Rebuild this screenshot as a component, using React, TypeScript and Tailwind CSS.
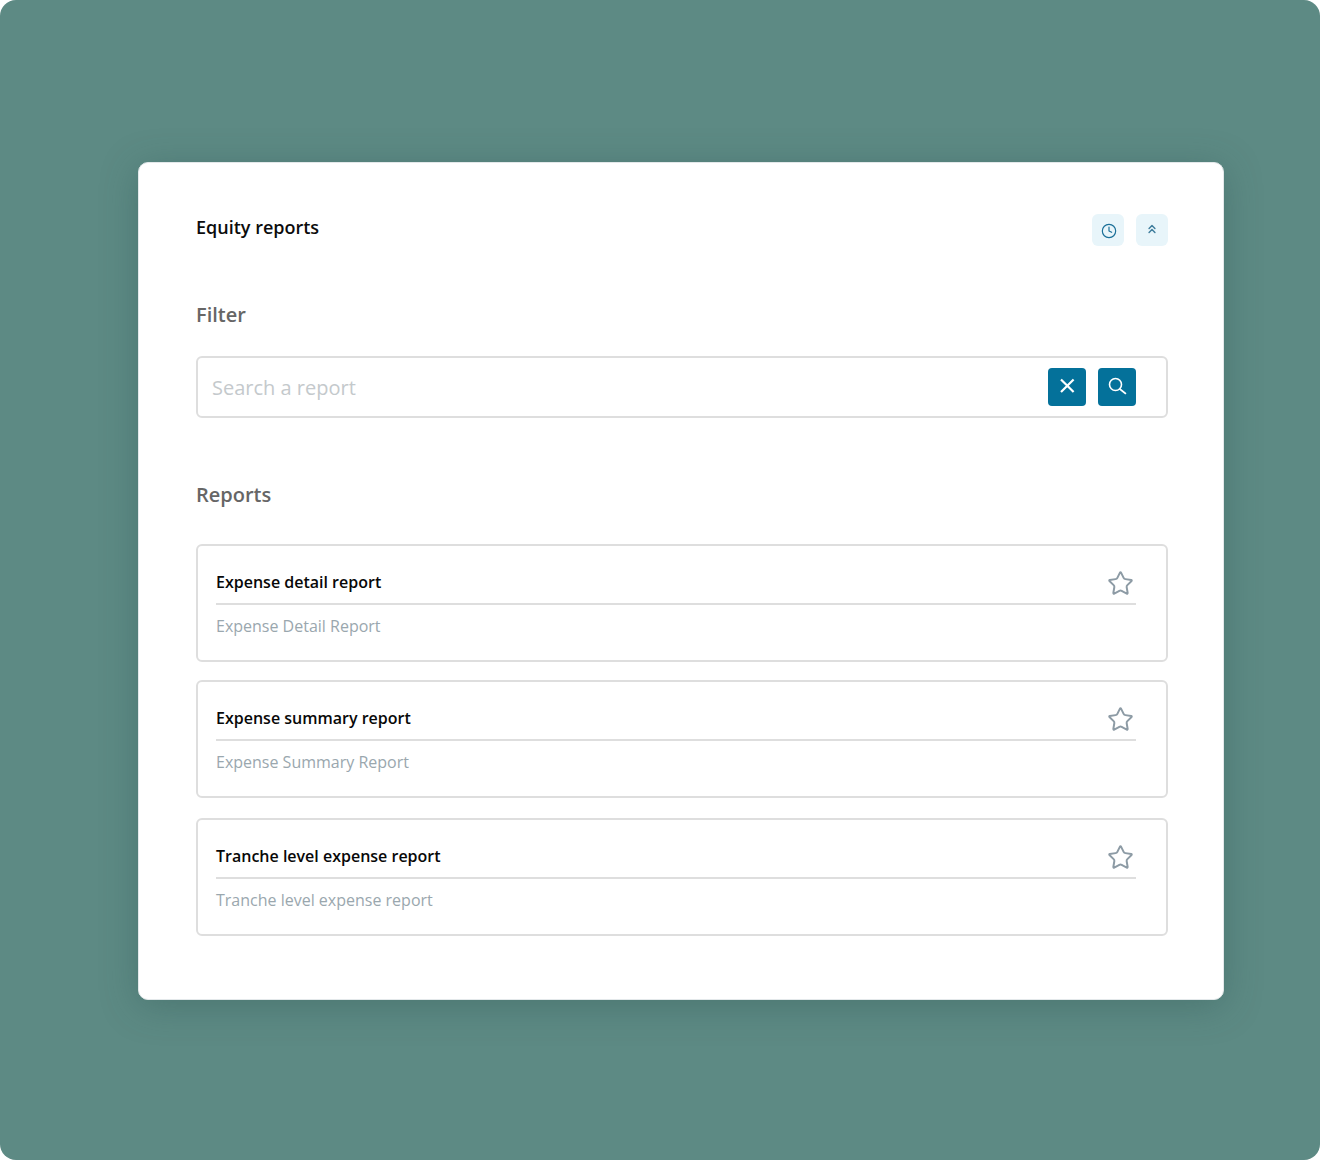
import React from "react";
import { Clock, ChevronsUp, Star } from "lucide-react";

function ReportCard({ title, sub, className }: { title: string; sub: string; className: string }) {
  return (
    <div className={"h-[118px] rounded-[6px] border-2 border-[#dedede] pl-[18px] pr-[30px] " + className}>
      <div className="flex h-[59px] items-end justify-between border-b-2 border-[#dedede]">
        <span className="pb-[10px] text-[16px] leading-[22px] font-semibold text-[#080808]">{title}</span>
        <Star size={27} strokeWidth={1.75} className="mb-[6px] mr-[2px] text-[#8d9ba5]" />
      </div>
      <div className="pt-[10px] text-[16px] leading-[22px] text-[#9aa7ae]">{sub}</div>
    </div>
  );
}

export default function App() {
  return (
    <div className="h-[1160px] w-[1320px] bg-white" style={{ fontFamily: '"Open Sans", sans-serif' }}>
      <div className="h-full overflow-hidden rounded-[16px] bg-[#5d8a84] pl-[138px] pt-[162px]">
        <div className="h-[838px] w-[1086px] rounded-[10px] border border-[#e3e8ea] bg-white pl-[57px] pr-[55px] shadow-[0_6px_36px_rgba(40,80,76,0.35)]">
          <div className="flex h-[83px] justify-between pt-[51px]">
            <h1 className="text-[18px] leading-[26px] font-semibold text-[#0c0c0c]">Equity reports</h1>
            <div className="flex gap-3">
              <button className="flex h-8 w-8 items-center justify-center rounded-[6px] bg-[#e8f5fa] text-[#1a6f98]">
                <Clock size={16} strokeWidth={1.75} className="mt-[2px] ml-[2px]" />
              </button>
              <button className="flex h-8 w-8 items-center justify-center rounded-[6px] bg-[#e8f5fa] text-[#3f7d9c]">
                <ChevronsUp size={14} strokeWidth={2.5} className="-mt-[3px]" />
              </button>
            </div>
          </div>
          <h2 className="mt-[55px] text-[20px] leading-[28px] font-semibold text-[#666666]">Filter</h2>
          <div className="mt-[27px] flex h-[62px] items-center justify-between rounded-[6px] border-2 border-[#dedede] pl-[14px] pr-[30px]">
            <span className="translate-y-px text-[20px] leading-[28px] text-[#c4c9cc]">Search a report</span>
            <div className="flex gap-3">
              <button className="flex h-[38px] w-[38px] items-center justify-center rounded-[4px] bg-[#04719a] text-white">
                <svg width="38" height="38" viewBox="0 0 38 38" fill="none" stroke="currentColor" strokeWidth="2.2">
                  <path d="M13 11.5 L25.6 24 M25.6 11.5 L13 24" />
                </svg>
              </button>
              <button className="flex h-[38px] w-[38px] items-center justify-center rounded-[4px] bg-[#04719a] text-white">
                <svg width="38" height="38" viewBox="0 0 38 38" fill="none" stroke="currentColor" strokeWidth="1.6">
                  <circle cx="17.5" cy="16.5" r="6" />
                  <path d="M21.8 21 L27.5 25.5" strokeLinecap="round" />
                </svg>
              </button>
            </div>
          </div>
          <h2 className="mt-[63px] text-[20px] leading-[28px] font-semibold text-[#666666]">Reports</h2>
          <div className="mt-[35px]">
            <ReportCard title="Expense detail report" sub="Expense Detail Report" className="" />
            <ReportCard title="Expense summary report" sub="Expense Summary Report" className="mt-[18px]" />
            <ReportCard title="Tranche level expense report" sub="Tranche level expense report" className="mt-[20px]" />
          </div>
        </div>
      </div>
    </div>
  );
}
